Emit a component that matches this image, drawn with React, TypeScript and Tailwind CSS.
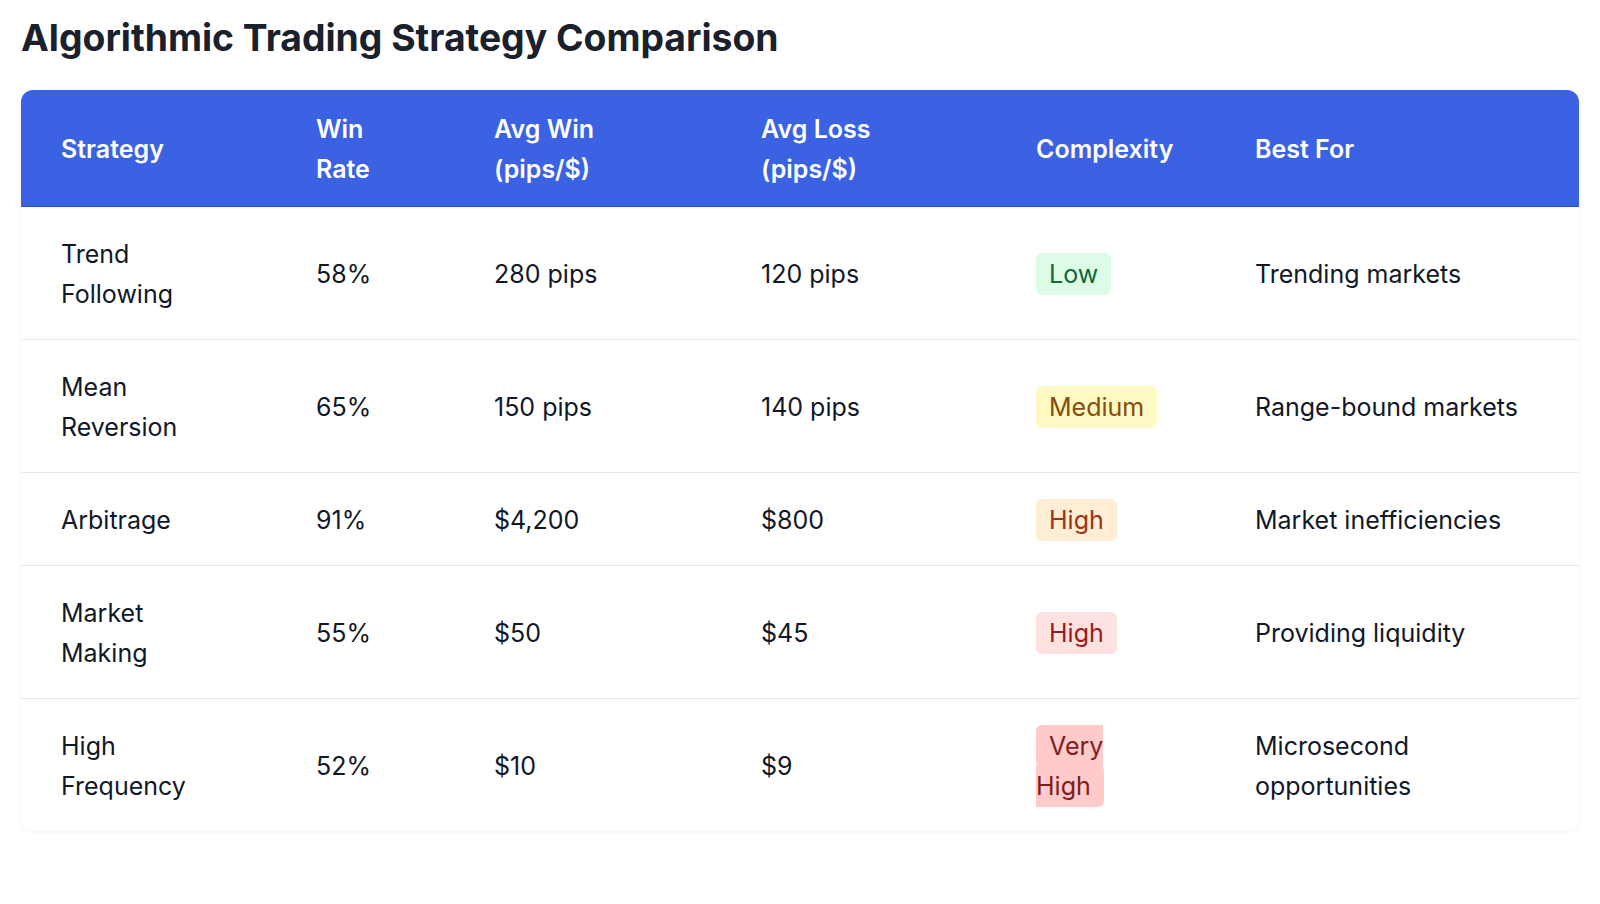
import React from "react"

type Level = "low" | "medium" | "high" | "highRed" | "veryHigh"

const badgeStyles: Record<Level, string> = {
  low: "bg-[#dcfce7] text-[#166534]",
  medium: "bg-[#fef9c3] text-[#854d0e]",
  high: "bg-[#ffedd5] text-[#9a3412]",
  highRed: "bg-[#fee2e2] text-[#991b1b]",
  veryHigh: "bg-[#fecaca] text-[#7f1d1d]",
}

const headers = [["Strategy"], ["Win", "Rate"], ["Avg Win", "(pips/$)"], ["Avg Loss", "(pips/$)"], ["Complexity"], ["Best For"]]

const rows: {
  name: string[]
  rate: string
  win: string
  loss: string
  level: Level
  complexity: string[]
  best: string[]
}[] = [
  { name: ["Trend", "Following"], rate: "58%", win: "280 pips", loss: "120 pips", level: "low", complexity: ["Low"], best: ["Trending markets"] },
  { name: ["Mean", "Reversion"], rate: "65%", win: "150 pips", loss: "140 pips", level: "medium", complexity: ["Medium"], best: ["Range-bound markets"] },
  { name: ["Arbitrage"], rate: "91%", win: "$4,200", loss: "$800", level: "high", complexity: ["High"], best: ["Market inefficiencies"] },
  { name: ["Market", "Making"], rate: "55%", win: "$50", loss: "$45", level: "highRed", complexity: ["High"], best: ["Providing liquidity"] },
  { name: ["High", "Frequency"], rate: "52%", win: "$10", loss: "$9", level: "veryHigh", complexity: ["Very", "High"], best: ["Microsecond", "opportunities"] },
]

function Lines({ lines }: { lines: string[] }) {
  return (
    <>
      {lines.map((l, i) => (
        <React.Fragment key={i}>
          {i > 0 && <br />}
          {l}
        </React.Fragment>
      ))}
    </>
  )
}

export default function App() {
  return (
    <div className="min-h-screen bg-white px-[21px] pt-[16px] font-['Inter','Liberation_Sans',sans-serif]">
      <h1 className="text-[37.3px] leading-[44px] font-bold text-[#1a202c]">
        Algorithmic Trading Strategy Comparison
      </h1>

      <div className="mt-[30px] overflow-hidden rounded-xl bg-white shadow-[0_1px_4px_rgba(0,0,0,0.05)]">
        <table className="w-full table-fixed border-collapse text-left text-[25px] leading-[40px]">
          <colgroup>
            <col className="w-[255px]" />
            <col className="w-[178px]" />
            <col className="w-[267px]" />
            <col className="w-[275px]" />
            <col className="w-[219px]" />
            <col />
          </colgroup>
          <thead>
            <tr className="bg-[#3a62e2] border-b border-[#2d52cf]">
              {headers.map((h, i) => (
                <th key={i} className="px-[40px] pt-[19px] pb-[17px] align-middle font-semibold text-white">
                  <Lines lines={h} />
                </th>
              ))}
            </tr>
          </thead>
          <tbody className="text-[#111827]">
            {rows.map((r, i) => (
              <tr key={i} className={i < rows.length - 1 ? "border-b border-[#e5e7eb]" : ""}>
                <td className="px-[40px] pt-[27px] pb-[25px] align-middle">
                  <Lines lines={r.name} />
                </td>
                <td className="px-[40px] pt-[27px] pb-[25px] align-middle">{r.rate}</td>
                <td className="px-[40px] pt-[27px] pb-[25px] align-middle">{r.win}</td>
                <td className="px-[40px] pt-[27px] pb-[25px] align-middle">{r.loss}</td>
                <td className="px-[40px] pt-[27px] pb-[25px] align-middle">
                  <span className={`rounded-md px-[13px] py-[6px] ${badgeStyles[r.level]}`}>
                    <Lines lines={r.complexity} />
                  </span>
                </td>
                <td className="px-[40px] pt-[27px] pb-[25px] align-middle">
                  <Lines lines={r.best} />
                </td>
              </tr>
            ))}
          </tbody>
        </table>
      </div>
    </div>
  )
}
